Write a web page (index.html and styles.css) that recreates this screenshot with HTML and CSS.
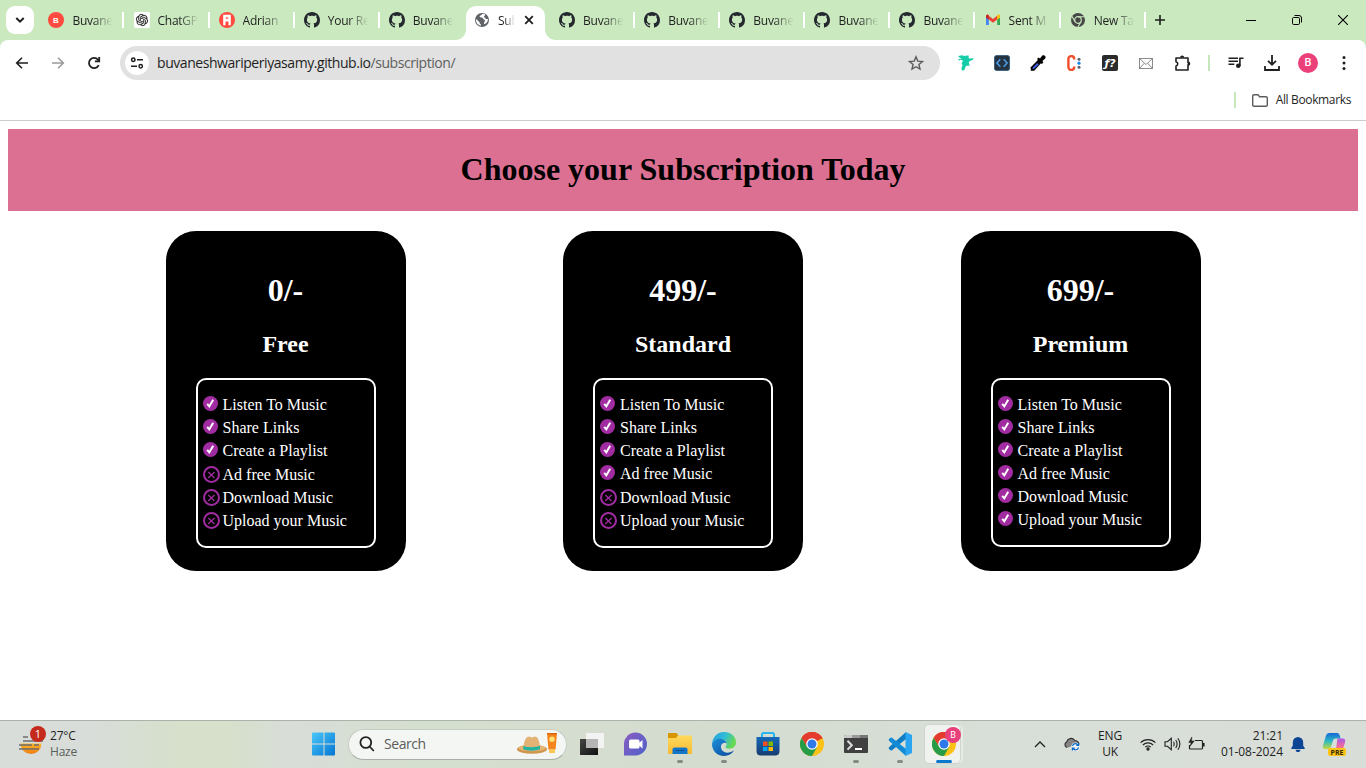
FILE: index.html
```html
<!DOCTYPE html>
<html lang="en">
<head>
<meta charset="utf-8">
<title>Subscription</title>
<link rel="stylesheet" href="styles.css">
</head>
<body>
<svg class="defs" width="0" height="0">
  <defs>
    <symbol id="github" viewBox="0 0 16 16"><path fill="#24292f" d="M8 0C3.58 0 0 3.58 0 8c0 3.54 2.29 6.53 5.47 7.59.4.07.55-.17.55-.38 0-.19-.01-.82-.01-1.49-2.01.37-2.53-.49-2.69-.94-.09-.23-.48-.94-.82-1.13-.28-.15-.68-.52-.01-.53.63-.01 1.08.58 1.23.82.72 1.21 1.87.87 2.33.66.07-.52.28-.87.51-1.07-1.78-.2-3.64-.89-3.64-3.95 0-.87.31-1.59.82-2.15-.08-.2-.36-1.02.08-2.12 0 0 .67-.21 2.2.82.64-.18 1.32-.27 2-.27.68 0 1.36.09 2 .27 1.53-1.04 2.2-.82 2.2-.82.44 1.1.16 1.92.08 2.12.51.56.82 1.27.82 2.15 0 3.07-1.87 3.75-3.65 3.95.29.25.54.73.54 1.48 0 1.07-.01 1.93-.01 2.2 0 .21.15.46.55.38A8.013 8.013 0 0016 8c0-4.42-3.58-8-8-8z"/></symbol>
    <symbol id="check" viewBox="0 0 15 15"><circle cx="7.5" cy="7.5" r="7.5" fill="#a12ca1"/><path d="M4.2 7.900l2.100 2.500L10.200 3.800" fill="none" stroke="#fff" stroke-width="2"/></symbol>
    <symbol id="cross" viewBox="0 0 17 17"><circle cx="8.500" cy="8.500" r="7.500" fill="none" stroke="#a12ca1" stroke-width="2"/><path d="M5.400 6l6 6M11.600 6l-6.400 6" fill="none" stroke="#a12ca1" stroke-width="1.300"/></symbol>
    <symbol id="chrome" viewBox="0 0 24 24"><circle cx="12" cy="12" r="12" fill="#fbc116"/><path d="M12 12L1.6 6A12 12 0 0 1 22.4 6z" fill="#e33b2e"/><path d="M12 6.4H22.6A12 12 0 0 0 1.6 6L6.9 14.6z" fill="#e33b2e"/><path d="M1.6 6A12 12 0 0 0 12 24l5.2-9.2L7.1 14.8z" fill="#269b48"/><circle cx="12" cy="12" r="5.8" fill="#fff"/><circle cx="12" cy="12" r="4.5" fill="#2f78ea"/></symbol>
  </defs>
</svg>

<header class="tabstrip">
  <div class="tab-search"><svg width="10" height="6" viewBox="0 0 10 6"><path d="M1.3 1L5 4.6 8.7 1" fill="none" stroke="#1f1f1f" stroke-width="2"/></svg></div>
  <div class="tab"><svg class="fav" viewBox="0 0 16 16"><circle cx="8" cy="8" r="8" fill="#fe4a3f"/><text x="8" y="11" class="fav-letter">B</text></svg><span class="tab-title">Buvane</span></div>
  <div class="tab"><svg class="fav" viewBox="0 0 16 16"><rect width="16" height="16" rx="2" fill="#fff"/><path transform="translate(2 2) scale(.5)" fill="#222" stroke="#222" stroke-width=".4" d="M22.2819 9.8211a5.9847 5.9847 0 0 0-.5157-4.9108 6.0462 6.0462 0 0 0-6.5098-2.9A6.0651 6.0651 0 0 0 4.9807 4.1818a5.9847 5.9847 0 0 0-3.9977 2.9 6.0462 6.0462 0 0 0 .7427 7.0966 5.98 5.98 0 0 0 .511 4.9107 6.051 6.051 0 0 0 6.5146 2.9001A5.9847 5.9847 0 0 0 13.2599 24a6.0557 6.0557 0 0 0 5.7718-4.2058 5.9894 5.9894 0 0 0 3.9977-2.9001 6.0557 6.0557 0 0 0-.7475-7.0729zm-9.022 12.6081a4.4755 4.4755 0 0 1-2.8764-1.0408l.1419-.0804 4.7783-2.7582a.7948.7948 0 0 0 .3927-.6813v-6.7369l2.02 1.1686a.071.071 0 0 1 .038.052v5.5826a4.504 4.504 0 0 1-4.4945 4.4944zm-9.6607-4.1254a4.4708 4.4708 0 0 1-.5346-3.0137l.142.0852 4.783 2.7582a.7712.7712 0 0 0 .7806 0l5.8428-3.3685v2.3324a.0804.0804 0 0 1-.0332.0615L9.74 19.9502a4.4992 4.4992 0 0 1-6.1408-1.6464zM2.3408 7.8956a4.485 4.485 0 0 1 2.3655-1.9728V11.6a.7664.7664 0 0 0 .3879.6765l5.8144 3.3543-2.0201 1.1685a.0757.0757 0 0 1-.071 0l-4.8303-2.7865A4.504 4.504 0 0 1 2.3408 7.872zm16.5963 3.8558L13.1038 8.364 15.1192 7.2a.0757.0757 0 0 1 .071 0l4.8303 2.7913a4.4944 4.4944 0 0 1-.6765 8.1042v-5.6772a.79.79 0 0 0-.407-.667zm2.0107-3.0231l-.142-.0852-4.7735-2.7818a.7759.7759 0 0 0-.7854 0L9.409 9.2297V6.8974a.0662.0662 0 0 1 .0284-.0615l4.8303-2.7866a4.4992 4.4992 0 0 1 6.6802 4.66zM8.3065 12.863l-2.02-1.1638a.0804.0804 0 0 1-.038-.0567V6.0742a4.4992 4.4992 0 0 1 7.3757-3.4537l-.142.0805L8.704 5.459a.7948.7948 0 0 0-.3927.6813zm1.0976-2.3654l2.602-1.4998 2.6069 1.4998v2.9994l-2.5974 1.4997-2.6067-1.4997Z"/></svg><span class="tab-title">ChatGP</span></div>
  <div class="tab"><svg class="fav" viewBox="0 0 16 16"><circle cx="8" cy="8" r="8" fill="#fe4a3f"/><path d="M4.2 2.800h7.600v10.400H9.500V9.600H6.500v3.600H4.200z" fill="#fff"/><path d="M6.800 5h2.400v2.200H6.800z" fill="#fe8a82"/></svg><span class="tab-title">Adrian</span></div>
  <div class="tab"><svg class="fav"><use href="#github"/></svg><span class="tab-title">Your Re</span></div>
  <div class="tab before-active"><svg class="fav"><use href="#github"/></svg><span class="tab-title">Buvane</span></div>
  <div class="tab active">
    <svg class="fav" viewBox="0 0 16 16"><circle cx="8" cy="8" r="7" fill="#5f6368"/><path d="M2.200 7.100l3.500 3.300v1.200l1.200 1v1.100C4.100 13.300 2 10.900 2 8z" fill="#fff"/><path d="M8.300 2.100c-.7.500-.7 1.200-1.900 1.400-.9.200-.9.900-.5 1.600.5.700 1.300.4 2.300.6 1.100.2.800 1.500 2 1.700 1 .200.900 1.900.100 2.600l-.4 2.300c2-.5 3.900-2.400 4.100-4.900-.2-.7-1-.4-1.700-.4-1-.1-.8-1.400-1.700-1.500-1.100-.1-1-1.100-.2-1.300.7-.2.300-1.400.6-1.900-.8-.3-1.900-.4-2.700-.2z" fill="#fff"/></svg>
    <span class="tab-title short">Sub</span>
    <svg class="close" width="10" height="10" viewBox="0 0 10 10"><path d="M1.200 1.200l7.600 7.600M8.800 1.200L1.200 8.800" stroke="#1f1f1f" stroke-width="1.800"/></svg>
  </div>
  <div class="tab"><svg class="fav"><use href="#github"/></svg><span class="tab-title">Buvane</span></div>
  <div class="tab"><svg class="fav"><use href="#github"/></svg><span class="tab-title">Buvane</span></div>
  <div class="tab"><svg class="fav"><use href="#github"/></svg><span class="tab-title">Buvane</span></div>
  <div class="tab"><svg class="fav"><use href="#github"/></svg><span class="tab-title">Buvane</span></div>
  <div class="tab"><svg class="fav"><use href="#github"/></svg><span class="tab-title">Buvane</span></div>
  <div class="tab"><svg class="fav" viewBox="0 0 16 16"><path d="M1 3.500V13h2.800V6z" fill="#4285f4"/><path d="M15 3.500V13h-2.800V6z" fill="#34a853"/><path d="M3.800 7.600V3.800L8 7l4.200-3.200v3.800L8 10.800z" fill="#ea4335"/><path d="M1 4.200C1 2.500 2.800 2 3.800 3v4.800L1 5.700z" fill="#c5221f"/><path d="M15 4.200c0-1.700-1.800-2.200-2.800-1.200v4.800L15 5.700z" fill="#fbbc04"/></svg><span class="tab-title">Sent M</span></div>
  <div class="tab"><svg class="fav" viewBox="0 0 16 16"><circle cx="8" cy="8" r="7" fill="#474747"/><circle cx="8" cy="8" r="3.300" fill="#474747" stroke="#cae9bf" stroke-width="1.200"/><path d="M8 4.700h6.600M5.100 9.700L1.900 4.200M10.900 9.700L7.800 15.200" stroke="#cae9bf" stroke-width="1.100"/></svg><span class="tab-title">New Ta</span></div>
  <svg class="new-tab" width="10" height="10" viewBox="0 0 10 10"><path d="M5 0v10M0 5h10" stroke="#1f1f1f" stroke-width="1.600"/></svg>
  <div class="window-buttons">
    <svg width="10" height="10" viewBox="0 0 10 10"><path d="M0 5.500h10" stroke="#000"/></svg>
    <svg width="10" height="10" viewBox="0 0 10 10" fill="none" stroke="#000"><rect x=".5" y="2.500" width="7" height="7" rx="1.200"/><path d="M2.500.5h4.500a2.500 2.500 0 0 1 2.500 2.500v4.500"/></svg>
    <svg width="10" height="10" viewBox="0 0 10 10"><path d="M0 0l10 10M10 0L0 10" stroke="#000" stroke-width="1.100"/></svg>
  </div>
</header>

<section class="chrome-bar">
  <div class="toolbar">
    <div class="tool"><svg width="16" height="16" viewBox="0 0 16 16" fill="none" stroke="#1f1f1f" stroke-width="1.600"><path d="M14 8H3M8 2.700L2.700 8 8 13.300"/></svg></div>
    <div class="tool"><svg width="16" height="16" viewBox="0 0 16 16" fill="none" stroke="#9b9b9b" stroke-width="1.600"><path d="M2 8h11M8 2.700L13.300 8 8 13.300"/></svg></div>
    <div class="tool"><svg width="16" height="16" viewBox="0 0 16 16" fill="none" stroke="#1f1f1f" stroke-width="1.800"><path d="M12.700 10.200A5.100 5.100 0 1 1 12 4.800L13.200 6"/><path d="M13.200 2v4.400H8.900"/></svg></div>
    <div class="omnibox">
      <span class="site-info"><svg width="14" height="14" viewBox="0 0 14 14" fill="none" stroke="#1f1f1f" stroke-width="1.500"><circle cx="3.300" cy="3.700" r="1.700"/><path d="M7 3.700h6M1 10.300h6"/><circle cx="10.700" cy="10.300" r="1.700"/></svg></span>
      <span class="url">buvaneshwariperiyasamy.github.io<span class="path">/subscription/</span></span>
      <svg class="star" width="16" height="16" viewBox="0 0 16 16" fill="none" stroke="#5c5c5c" stroke-width="1.400"><path d="M8 1.800l1.800 4.300 4.700.4-3.600 3 1.100 4.600L8 11.700l-4 2.400 1.100-4.600-3.600-3 4.700-.4z"/></svg>
    </div>
    <div class="tool"><svg width="16" height="16" viewBox="0 0 16 16" fill="#15cda8"><path d="M.3 1L4 .2l2.300.8 3-.5 1.900.3-.9 1.300.9 1.500 4.500-.3-1.200 1.800-2.900.8-.8 1.500.9 3.700-1.500-.7-2.300.6L6.400 15l-1.800.8L3.300 13.700l1.200-3.400-.9-2 1.500-2.600L2 4.400 1 6l-.7-1.800 3.600-1L1.200 2.600z"/></svg></div>
    <div class="tool"><svg width="16" height="16" viewBox="0 0 16 16"><rect x=".4" y=".4" width="15.200" height="15.200" rx="2.500" fill="#263340" stroke="#25547c" stroke-width=".8"/><path d="M6.300 4.300L2.900 8l3.400 3.700M9.700 4.300L13.100 8l-3.400 3.700" fill="none" stroke="#4aa3f3" stroke-width="1.400"/></svg></div>
    <div class="tool"><svg width="16" height="16" viewBox="0 0 16 16"><path d="M.8 15.700v-3.500l7.800-8L11.900 7.200l-7.700 8.500z" fill="#000"/><path d="M2.600 13.900v-1.100l4.700-4.900 1.500 1.600-4.600 4.400z" fill="#3d5be0"/><path d="M7 4.100l1.600-1.600 1.400 1L12.300.6c1.800-1.300 4.300.8 2.900 2.800L12.400 6l1 1.500-1.600 1.500z" fill="#000"/></svg></div>
    <div class="tool"><svg width="16" height="16" viewBox="0 0 16 16"><path d="M8.200 4.500V4a2.900 2.900 0 0 0-5.800 0v8a2.900 2.900 0 0 0 5.800 0v-.5" fill="none" stroke="#f04e2c" stroke-width="2.400"/><circle cx="13" cy="4.200" r="1.500" fill="#59636e"/><circle cx="13" cy="8.200" r="1.600" fill="#1688ef"/><circle cx="13" cy="12.200" r="1.500" fill="#59636e"/></svg></div>
    <div class="tool"><svg width="16" height="16" viewBox="0 0 16 16"><rect width="16" height="16" rx="2" fill="#2b2b2b"/><text x="8" y="12" class="ext-letter">ƒ?</text></svg></div>
    <div class="tool"><svg width="14" height="11" viewBox="0 0 14 11" fill="none" stroke="#808080" stroke-width=".9"><rect x=".5" y=".5" width="13" height="10"/><path d="M.5.5L7 6.500 13.500.5M.5 10.500l4.700-5.200M13.500 10.500L8.800 5.300"/></svg></div>
    <div class="tool"><svg class="puzzle" width="18" height="18" viewBox="0 0 18 18"><path d="M2 4h12v4.500a1.500 1.500 0 0 1 0 2.500v5H2v-4a2.200 2.200 0 0 0 0-4.300z" fill="none" stroke="#1f1f1f" stroke-width="1.600" stroke-linejoin="round"/><path d="M6 3.500a2.100 2.100 0 0 1 4.200 0zM14.200 7.600a2.100 2.100 0 0 1 0 4.200z" fill="#1f1f1f"/></svg></div>
    <span class="divider"></span>
    <div class="tool"><svg width="16" height="16" viewBox="0 0 16 16"><path d="M.5 3.300h9.500M.5 6.300h9.500M.5 9.300h5.800" stroke="#1f1f1f" stroke-width="1.500"/><circle cx="10.300" cy="10.800" r="2.300" fill="#1f1f1f"/><path d="M11.900 11V3.200h3.600" fill="none" stroke="#1f1f1f" stroke-width="1.600"/></svg></div>
    <div class="tool"><svg width="16" height="16" viewBox="0 0 16 16" fill="none" stroke="#1f1f1f" stroke-width="1.800"><path d="M8 0v9.500M4 5.800L8 9.800l4-4M1 11v4h14v-4"/></svg></div>
    <div class="tool"><span class="avatar">B</span></div>
    <div class="tool"><svg width="4" height="14" viewBox="0 0 4 14" fill="#1f1f1f"><circle cx="2" cy="1.600" r="1.500"/><circle cx="2" cy="7" r="1.500"/><circle cx="2" cy="12.400" r="1.500"/></svg></div>
  </div>
  <div class="bookmarks">
    <span class="divider"></span>
    <svg width="16" height="13" viewBox="0 0 16 13"><path d="M.7 2A1.200 1.200 0 0 1 1.900.8h4l1.800 1.900h6.400a1.200 1.200 0 0 1 1.200 1.200v7.200a1.200 1.200 0 0 1-1.200 1.200H1.900A1.200 1.200 0 0 1 .7 11.100z" fill="none" stroke="#5c5c5c" stroke-width="1.400"/></svg>
    <span class="bookmarks-label">All Bookmarks</span>
  </div>
</section>

<main class="page">
  <h1 class="banner">Choose your Subscription Today</h1>
  <div class="plans">
    <article class="plan">
      <h1 class="price">0/-</h1>
      <h2 class="name">Free</h2>
      <ul class="features">
        <li><svg class="check"><use href="#check"/></svg>Listen To Music</li>
        <li><svg class="check"><use href="#check"/></svg>Share Links</li>
        <li><svg class="check"><use href="#check"/></svg>Create a Playlist</li>
        <li class="first-off"><svg class="cross"><use href="#cross"/></svg>Ad free Music</li>
        <li><svg class="cross"><use href="#cross"/></svg>Download Music</li>
        <li><svg class="cross"><use href="#cross"/></svg>Upload your Music</li>
      </ul>
    </article>
    <article class="plan">
      <h1 class="price">499/-</h1>
      <h2 class="name">Standard</h2>
      <ul class="features">
        <li><svg class="check"><use href="#check"/></svg>Listen To Music</li>
        <li><svg class="check"><use href="#check"/></svg>Share Links</li>
        <li><svg class="check"><use href="#check"/></svg>Create a Playlist</li>
        <li><svg class="check"><use href="#check"/></svg>Ad free Music</li>
        <li class="first-off"><svg class="cross"><use href="#cross"/></svg>Download Music</li>
        <li><svg class="cross"><use href="#cross"/></svg>Upload your Music</li>
      </ul>
    </article>
    <article class="plan">
      <h1 class="price">699/-</h1>
      <h2 class="name">Premium</h2>
      <ul class="features">
        <li><svg class="check"><use href="#check"/></svg>Listen To Music</li>
        <li><svg class="check"><use href="#check"/></svg>Share Links</li>
        <li><svg class="check"><use href="#check"/></svg>Create a Playlist</li>
        <li><svg class="check"><use href="#check"/></svg>Ad free Music</li>
        <li><svg class="check"><use href="#check"/></svg>Download Music</li>
        <li><svg class="check"><use href="#check"/></svg>Upload your Music</li>
      </ul>
    </article>
  </div>
</main>

<footer class="taskbar">
  <div class="weather">
    <div class="weather-icon">
      <svg width="24" height="24" viewBox="0 0 24 24"><defs><linearGradient id="sun" x2="0" y2="1"><stop offset="0" stop-color="#fbb62a"/><stop offset="1" stop-color="#ee7c14"/></linearGradient></defs><path d="M1.500 11.500h21a10.500 10.500 0 0 1-21 0z" fill="url(#sun)"/><path d="M4 5h5M4 9h20M0 13h13M15 13h5M0 17h20" stroke="#6c6c6c" stroke-width="1.700"/></svg>
      <span class="badge">1</span>
    </div>
    <div class="weather-text"><span>27°C</span><span class="muted">Haze</span></div>
  </div>
  <div class="app"><svg width="24" height="24" viewBox="0 0 24 24"><defs><linearGradient id="win" x2="1" y2="1"><stop offset="0" stop-color="#4cc8fa"/><stop offset="1" stop-color="#0275d3"/></linearGradient></defs><path d="M0 1.500Q0 .5 1 .5h10.500v11H0zM12.500.5H22q1 0 1 1v10H12.500zM0 12.500h11.500v11H1q-1 0-1-1zM12.500 12.500H23v10q0 1-1 1h-9.500z" fill="url(#win)"/></svg></div>
  <div class="search">
    <svg width="16" height="16" viewBox="0 0 16 16" fill="none" stroke="#222" stroke-width="1.800"><circle cx="6.800" cy="6.500" r="5.400"/><path d="M10.600 10.500l4.200 4.500"/></svg>
    <span class="search-label">Search</span>
    <svg class="search-art" width="40" height="22" viewBox="0 0 40 22"><ellipse cx="15" cy="16.200" rx="15" ry="4.500" fill="#cf9650"/><ellipse cx="15" cy="15" rx="13.500" ry="3.300" fill="#e5b674"/><path d="M6.500 15.500C7 6.500 9.500 3.500 12 3.500c1.500 0 2 .9 3 .9s1.500-.9 3-.9c2.700 0 4.700 4 5 12-3 2-13 2-16.500 0z" fill="#e3b375"/><path d="M6.400 13c4 1.600 12.600 1.600 16.600-.2v3.500c-4 1.800-13 1.800-16.800 0z" fill="#25b3a1"/><path d="M30 0h10l-1.400 16.500h-7.200z" fill="#f5841f"/><path d="M30 0h10v1.500H30z" fill="#d96712"/><circle cx="35" cy="6.300" r="2.700" fill="#ffe073"/><path d="M32 16.500h6V20h-6z" fill="#fbc650"/></svg>
  </div>
  <div class="app"><svg width="24" height="24" viewBox="0 0 24 24"><defs><linearGradient id="tv" x2="1" y2="1"><stop offset="0" stop-color="#454545"/><stop offset="1" stop-color="#111"/></linearGradient></defs><rect y="7" width="18" height="16" fill="url(#tv)"/><rect x="6" y="1" width="18" height="15" fill="#f3f3f3"/><path d="M6 7h12v9H6z" fill="#b5b5b5"/></svg></div>
  <div class="app"><svg width="24" height="24" viewBox="0 0 24 24"><defs><linearGradient id="chat" x2="1" y2="1"><stop offset="0" stop-color="#8b5cc2"/><stop offset="1" stop-color="#4e62c9"/></linearGradient></defs><path d="M0 23.500V12.500a11.500 11.500 0 1 1 11.500 11z" fill="url(#chat)"/><rect x="5" y="7.500" width="10.500" height="9" rx="1.500" fill="#fff"/><path d="M14.500 11.500l4-3.500v8.500l-4-3.500z" fill="#fff"/></svg></div>
  <div class="app open"><svg width="24" height="24" viewBox="0 0 24 24"><defs><linearGradient id="fold" x2="0" y2="1"><stop offset="0" stop-color="#ffd95e"/><stop offset="1" stop-color="#f7bb31"/></linearGradient></defs><path d="M0 2q0-1 1-1h7.500l2 2.500L9 6H0z" fill="#d99500"/><path d="M0 6h8l2-2.500h13q1 0 1 1V22H1q-1 0-1-1z" fill="url(#fold)"/><path d="M4.500 22v-4.500q0-2 2-2h11q2 0 2 2V22z" fill="#1476c9"/><path d="M7.500 18.500h9" stroke="#0a5397"/></svg></div>
  <div class="app open"><svg width="24" height="24" viewBox="0 0 24 24"><defs><linearGradient id="edgeA" x2="1" y2=".4"><stop offset="0" stop-color="#239ae1"/><stop offset=".55" stop-color="#31bdd7"/><stop offset="1" stop-color="#67d951"/></linearGradient><linearGradient id="edgeB" x2="1" y2="1"><stop offset="0" stop-color="#1b8fdb"/><stop offset="1" stop-color="#0c479a"/></linearGradient></defs><path d="M0 11.500C.8 4.800 5.700 0 12 0c7 0 12 4.800 12 10.300 0 4-3 6.400-6.500 6.400-2.700 0-4.200-1-4-2 .1-.7 1.100-1.200 1.100-3C14.600 9 11.700 7 8 7c-4 0-7 2.200-8 4.500z" fill="url(#edgeA)"/><path d="M0 12C.9 8.900 4 6.800 7.600 6.800c3.500 0 6.500 1.800 7 4.500-1.300-1.200-4.700-.9-5.500 2.200-.9 3.500 2 7.200 6.200 7.200 3 0 4.700-.9 6.800-2.100C20 22 16.300 24 12 24 5 24 0 18.500 0 12z" fill="url(#edgeB)"/></svg></div>
  <div class="app"><svg width="24" height="24" viewBox="0 0 24 24"><defs><linearGradient id="store" x2="0" y2="1"><stop offset="0" stop-color="#1369ba"/><stop offset="1" stop-color="#173b70"/></linearGradient></defs><path d="M6 6V2.500Q6 1 7.500 1h9Q18 1 18 2.500V6" fill="none" stroke="#27b5ef" stroke-width="2"/><path d="M.5 5h23v14q0 4.500-4.500 4.500H5Q.5 23.500.5 19z" fill="url(#store)"/><path d="M7 9.500h4.500V14H7z" fill="#f25022"/><path d="M12.500 9.500H17V14h-4.500z" fill="#7fba00"/><path d="M7 15h4.500v4H7z" fill="#00a4ef"/><path d="M12.500 15H17v4h-4.500z" fill="#ffb900"/></svg></div>
  <div class="app"><svg width="24" height="24"><use href="#chrome"/></svg></div>
  <div class="app open"><svg width="24" height="24" viewBox="0 0 24 24"><path d="M0 4q0-1 1-1h22q1 0 1 1v16q0 1-1 1H1q-1 0-1-1z" fill="#404040"/><path d="M0 6V4q0-1 1-1h7v3z" fill="#c9c9c9"/><path d="M8 3h8v3H8z" fill="#999"/><path d="M16 3h7q1 0 1 1v2h-8z" fill="#777"/><path d="M3.500 8.800l4.300 4.400-4.300 4.400" fill="none" stroke="#ddd" stroke-width="2"/><path d="M11 17h7" stroke="#fff" stroke-width="2"/></svg></div>
  <div class="app open"><svg width="24" height="24" viewBox="0 0 24 24"><path d="M18 0L1 15.200q-.9.900 0 1.700l1.500 1.300q.7.500 1.500 0L18 7z" fill="#0c7cc5"/><path d="M18 24L1 8.800q-.9-.9 0-1.700l1.500-1.300q.7-.5 1.500 0L18 17z" fill="#118bd6"/><path d="M17.500 0L24 3v18l-6.500 3z" fill="#29a5f1"/></svg></div>
  <div class="app active-app"><svg width="24" height="24"><use href="#chrome"/></svg><span class="profile">B</span></div>

  <div class="tray">
    <div class="tray-cell"><svg width="12" height="7" viewBox="0 0 12 7"><path d="M1 6l5-5 5 5" fill="none" stroke="#222" stroke-width="1.300"/></svg></div>
    <div class="tray-cell"><svg width="16" height="14" viewBox="0 0 16 14"><path d="M3.200 10.500A2.900 2.900 0 0 1 2.700 5 4.500 4.500 0 0 1 11 3.700a3.500 3.500 0 0 1 3.800 4" fill="#858585" stroke="#2d2d2d" stroke-width="1.100"/><circle cx="11.500" cy="9.700" r="4.300" fill="#eef3f6"/><path d="M8.500 9a3 3 0 0 1 5.500-1M14.500 10.400a3 3 0 0 1-5.500 1M14.600 6v2.300h-2.300M8.400 13.400v-2.300h2.300" fill="none" stroke="#0869c8" stroke-width="1.200"/></svg></div>
    <div class="lang"><span>ENG</span><span>UK</span></div>
    <div class="tray-small"><svg width="16" height="13" viewBox="0 0 16 13" fill="none" stroke="#222" stroke-width="1.100"><path d="M.6 4.700a10.500 10.500 0 0 1 14.800 0M2.900 7a7.200 7.200 0 0 1 10.200 0M5.200 9.200a4 4 0 0 1 5.600 0"/><circle cx="8" cy="11" r="1.100" fill="#222"/></svg></div>
    <div class="tray-small"><svg width="17" height="14" viewBox="0 0 17 14" fill="none" stroke="#222" stroke-width="1.100"><path d="M1 4.700h2.500L7.300 1.300v11.400L3.500 9.300H1zM9.500 4.800q1.400 2.200 0 4.400M11.700 3q2.800 4 0 8M13.900 1.300q4 5.700 0 11.400"/></svg></div>
    <div class="tray-small"><svg width="17" height="14" viewBox="0 0 17 14" fill="none" stroke="#222" stroke-width="1.200"><path d="M7 3.500h6.500q1 0 1 1v6.500q0 1-1 1H2.500q-1 0-1-1V8"/><path d="M15.800 6v3.500" stroke-width="1.600"/><path d="M3.800 0L.8 5.500h2.400L2 9.300 6.300 3.900H3.500z" fill="#222" stroke-width=".5"/></svg></div>
    <div class="clock"><span>21:21</span><span>01-08-2024</span></div>
    <div class="bell"><svg width="14" height="16" viewBox="0 0 14 16" fill="#0b4593"><path d="M1.800 6.200a5.200 5.200 0 0 1 10.400 0v3.500L13.700 12v1H.3v-1l1.500-2.300zM4.600 13.700h4.800a2.400 2.400 0 0 1-4.800 0z"/></svg></div>
    <div class="copilot"><svg width="24" height="24" viewBox="0 0 24 24"><defs><linearGradient id="copA" x2="0" y2="1"><stop offset="0" stop-color="#1666d5"/><stop offset=".5" stop-color="#2bb9c6"/><stop offset="1" stop-color="#c6d83b"/></linearGradient><linearGradient id="copB" x2="0" y2="1"><stop offset="0" stop-color="#a85ae8"/><stop offset=".6" stop-color="#f06b9d"/><stop offset="1" stop-color="#f79a50"/></linearGradient></defs><path d="M7 1h8q2 0 2.600 2l1 3.500h-5q-2 0-2.600 2L9 15q-.6 2-2.500 2H3Q.3 17 .9 13.500L4 3.500Q4.700 1 7 1z" fill="url(#copA)"/><path d="M15.500 6.500H21q2.700.3 2.100 3.500L21 17q-.7 2.500-3 2.500h-6.500q2-.5 2.400-2z" fill="url(#copB)"/><rect x="6" y="16" width="18" height="8" rx="2" fill="#fcc419"/><text x="15" y="22.500" class="pre">PRE</text></svg></div>
  </div>
</footer>
</body>
</html>
```
FILE: styles.css
```css
* { box-sizing: border-box; }

html, body { height: 100%; }

body {
  margin: 0;
  display: flex;
  flex-direction: column;
  background: #fff;
  overflow: hidden;
  font-family: "Open Sans", "Noto Sans", sans-serif;
}

svg { display: block; flex: none; }
.defs { position: absolute; }

/* Tab strip */
.tabstrip {
  flex: none;
  height: 40px;
  display: flex;
  align-items: center;
  background: #cae9bf;
}
.tab-search {
  width: 28px;
  height: 28px;
  margin: 0 14.400px 0 6px;
  border-radius: 9px;
  background: #fff;
  display: flex;
  align-items: center;
  justify-content: center;
}
.tab {
  width: 85.120px;
  height: 40px;
  display: flex;
  align-items: center;
  flex: none;
}
.tab::after {
  content: "";
  width: 2px;
  height: 16px;
  margin-left: 8px;
  background: #fff;
}
.tab.before-active::after { visibility: hidden; }
.fav { width: 16px; height: 16px; }
.fav-letter {
  font: bold 8px "Liberation Sans", sans-serif;
  fill: #fff;
  text-anchor: middle;
}
.tab-title {
  width: 42px;
  margin-left: 8px;
  white-space: nowrap;
  font-size: 12px;
  letter-spacing: -0.25px;
  color: #1f1f1f;
  -webkit-mask-image: linear-gradient(90deg, #000 50%, transparent 96%);
  mask-image: linear-gradient(90deg, #000 50%, transparent 96%);
}
.tab-title.short {
  width: 21px;
  -webkit-mask-image: linear-gradient(90deg, #000 30%, transparent 80%);
  mask-image: linear-gradient(90deg, #000 30%, transparent 80%);
}
.tab.active {
  width: 79px;
  height: 34px;
  margin: 6px 6.120px 0 -8px;
  padding: 0 0 6px 8px;
  border-radius: 10px 10px 0 0;
  background: #fff;
  position: relative;
}
.tab.active + .tab { margin-left: 8px; }
.tab.active::before, .tab.active::after {
  content: "";
  position: absolute;
  bottom: 0;
  width: 10px;
  height: 10px;
  margin: 0;
}
.tab.active::before { left: -10px; background: radial-gradient(circle at 0 0, transparent 9.500px, #fff 10px); }
.tab.active::after { right: -10px; background: radial-gradient(circle at 100% 0, transparent 9.500px, #fff 10px); }
.close { margin-left: 5px; }
.window-buttons {
  margin-left: auto;
  display: flex;
  gap: 36px;
  padding-right: 18px;
}

/* Address and bookmark bars */
.chrome-bar {
  flex: none;
  height: 81px;
  border-bottom: 1px solid #cdcdcd;
  background: linear-gradient(#cae9bf 10px, #fff 10px);
}
.toolbar {
  height: 46px;
  display: flex;
  align-items: center;
  padding: 0 4px;
  background: #fff;
  border-radius: 8px 8px 0 0;
}
.tool {
  width: 36px;
  flex: none;
  display: flex;
  justify-content: center;
}
.puzzle { margin-left: 2px; }
.omnibox {
  width: 820px;
  height: 34px;
  flex: none;
  margin: 0 8px;
  padding: 0 16px 0 5px;
  border-radius: 17px;
  background: #e1e1e1;
  display: flex;
  align-items: center;
}
.site-info {
  width: 24px;
  height: 24px;
  border-radius: 50%;
  background: #fff;
  display: flex;
  align-items: center;
  justify-content: center;
}
.url {
  margin-left: 8px;
  padding-bottom: 2px;
  font-size: 14px;
  letter-spacing: -0.44px;
  color: #1f1f1f;
}
.path { color: #5e5e5e; }
.star { margin-left: auto; }
.divider {
  width: 2px;
  height: 16px;
  margin: 0 8px;
  background: #c6e6bb;
}
.avatar {
  width: 20px;
  height: 20px;
  border-radius: 50%;
  background: #ec407a;
  color: #fff;
  font: 500 11px/20px Roboto, sans-serif;
  text-align: center;
}
.bookmarks {
  height: 28px;
  display: flex;
  align-items: center;
  justify-content: flex-end;
  padding-right: 15px;
}
.bookmarks .divider { margin-right: 16px; }
.bookmarks-label {
  margin-left: 8px;
  padding-bottom: 1px;
  font-size: 12px;
  letter-spacing: -0.36px;
  color: #1f1f1f;
}

/* Page */
.page {
  flex: 1;
  padding: 8px;
  font-family: "Liberation Serif", "Times New Roman", serif;
}
.banner {
  height: 82px;
  margin: 0 0 20px;
  background: #db7093;
  font-size: 32px;
  line-height: 81px;
  text-align: center;
  color: #000;
}
.plans {
  display: flex;
  justify-content: space-evenly;
}
.plan {
  width: 240px;
  height: 340px;
  padding: 41px 30px 0;
  border-radius: 30px;
  background: #000;
  color: #fff;
  text-align: center;
}
.price { margin: 0; font-size: 32px; line-height: 37px; }
.name { margin: 22px 0 20px; font-size: 24px; line-height: 27px; }
.features {
  margin: 0;
  padding: 14px 5px 13px;
  border: 2px solid #fff;
  border-radius: 10px;
  list-style: none;
  text-align: left;
  font-size: 16px;
  line-height: 21px;
}
.features li { display: flex; height: 23px; white-space: nowrap; }
.features .first-off { margin-top: 1px; }
.check { width: 15px; height: 15px; margin: 2px 5px 0 0; }
.cross { width: 17px; height: 17px; margin: 2px 3px 0 0; }

/* Taskbar */
.taskbar {
  flex: none;
  height: 48px;
  display: flex;
  align-items: center;
  padding-bottom: 1px;
  border-top: 1px solid #adb1ab;
  background: linear-gradient(90deg, #d8ddd9 0, #d8ddd9 90px, #d6e0cb 180px, #d6e0cb 230px, #d8ddd8 290px, #d5dfcf 420px, #d4dccf 700px, #d8dfd8 1000px, #d9ddd8 100%);
  font-size: 12px;
  color: #1f1f1f;
}
.weather {
  width: 302px;
  padding-left: 19px;
  display: flex;
  align-items: center;
}
.weather-icon { position: relative; }
.badge {
  position: absolute;
  left: 11px;
  top: -6px;
  width: 16px;
  height: 16px;
  border-radius: 50%;
  background: #c42b1c;
  color: #fff;
  font-size: 11px;
  line-height: 16px;
  text-align: center;
}
.weather-text {
  display: flex;
  flex-direction: column;
  margin-left: 7px;
  line-height: 16px;
  letter-spacing: -0.2px;
}
.muted { color: #5b5f5b; }
.app {
  width: 44px;
  height: 46px;
  flex: none;
  display: flex;
  align-items: center;
  justify-content: center;
  position: relative;
}
.app.open::after, .active-app::after {
  content: "";
  position: absolute;
  bottom: 4px;
  width: 6px;
  height: 3px;
  border-radius: 2px;
  background: #858a85;
}
.active-app { z-index: 0; }
.active-app::before {
  content: "";
  position: absolute;
  z-index: -1;
  left: 3px;
  top: 4px;
  width: 35px;
  height: 38px;
  border-radius: 4px;
  background: #eff2ee;
  box-shadow: 0 0 0 1px #cfd5cd, 3px 0 0 0 #e6ebe4;
}
.active-app::after { width: 16px; background: #0b78d0; }
.profile {
  position: absolute;
  left: 23px;
  top: 6px;
  width: 16px;
  height: 16px;
  border-radius: 50%;
  background: #e8407b;
  color: #fff;
  font: 9px/16px Roboto, sans-serif;
  text-align: center;
}
.search {
  width: 219px;
  height: 31px;
  flex: none;
  margin: 0 3px 0 2px;
  padding: 0 9px 0 10px;
  border-radius: 16px;
  border: 1px solid #c6cdc4;
  border-bottom-color: #a9afa7;
  background: #f3f6f2;
  display: flex;
  align-items: center;
}
.search-label {
  margin-left: 9px;
  padding-bottom: 1px;
  font-size: 14px;
  letter-spacing: -0.45px;
  color: #5c5c5c;
}
.search-art { margin-left: auto; }
.tray {
  margin-left: auto;
  display: flex;
  align-items: center;
  padding-right: 20px;
}
.tray-cell { width: 32px; display: flex; justify-content: center; }
.tray-small { width: 24px; display: flex; justify-content: center; }
.lang {
  width: 44px;
  margin-right: 4px;
  display: flex;
  flex-direction: column;
  align-items: center;
  line-height: 16px;
  letter-spacing: -0.2px;
}
.clock {
  width: 75px;
  display: flex;
  flex-direction: column;
  align-items: flex-end;
  line-height: 16px;
  letter-spacing: -0.05px;
}
.bell { width: 24px; margin: 0 12px 0 3px; display: flex; justify-content: center; }
.pre { font: bold 7px "Open Sans", sans-serif; fill: #3b2b00; text-anchor: middle; }
.ext-letter { font: italic bold 11px "DejaVu Sans", sans-serif; fill: #fff; text-anchor: middle; }
```
